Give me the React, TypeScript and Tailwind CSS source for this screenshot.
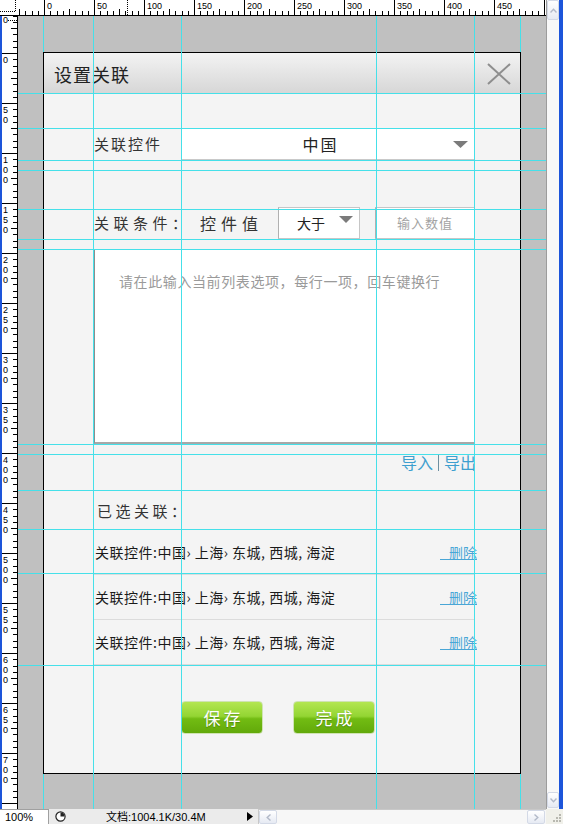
import React from "react"

// guide positions, in canvas pixels (canvas starts at page x 18, y 16)
const vGuides = [75, 163, 358, 456]
const edgeGuides = [25, 502]
const hGuides = [77, 112, 144, 154, 193, 223, 233, 428, 438, 474, 513, 557, 649]

const rows = [1, 2, 3]

function Corner() {
  return (
    <svg width="18" height="16" className="block bg-white">
      <line x1={0} y1={11.5} x2={15} y2={11.5} stroke="#000" strokeDasharray="1 1" />
      <line x1={15.5} y1={0} x2={15.5} y2={12} stroke="#000" strokeDasharray="1 1" />
      <line x1={0} y1={15.5} x2={18} y2={15.5} stroke="#000" />
    </svg>
  )
}

function TopRuler() {
  const marks: React.ReactNode[] = []
  for (let k = -1; k <= 10; k++) {
    const base = 26 + 50 * k
    marks.push(<line key={`M${k}`} x1={base + 0.5} y1={0} x2={base + 0.5} y2={15} stroke="#000" />)
    for (let j = 1; j < 8; j++) {
      const x = Math.round(base + j * 6.25) + 0.5
      marks.push(<line key={`m${k}-${j}`} x1={x} y1={j === 4 ? 9 : 11} x2={x} y2={15} stroke="#000" />)
    }
    if (k >= 0 && k <= 9)
      marks.push(
        <text key={`t${k}`} x={base + 3} y={9} fontSize={9} fontFamily="Liberation Sans, sans-serif" fill="#000">
          {50 * k}
        </text>
      )
  }
  return (
    <svg width="528" height="16" className="block bg-white">
      {marks}
      <line x1={0} y1={15.5} x2={528} y2={15.5} stroke="#000" />
      <line x1={109.5} y1={0} x2={109.5} y2={15} stroke="#000" strokeDasharray="1 1" />
    </svg>
  )
}

function LeftRuler() {
  const marks: React.ReactNode[] = []
  for (let k = -1; k <= 15; k++) {
    const base = 37 + 50 * k
    marks.push(<line key={`M${k}`} x1={2} y1={base + 0.5} x2={17} y2={base + 0.5} stroke="#000" />)
    for (let j = 1; j < 8; j++) {
      const y = Math.round(base + j * 6.25) + 0.5
      marks.push(<line key={`m${k}-${j}`} x1={j === 4 ? 11 : 13} y1={y} x2={17} y2={y} stroke="#000" />)
    }
    String(Math.abs(50 * k))
      .split("")
      .forEach((d, i) => {
        const y = base + 10 + 10 * i
        if (y < 6 || y > 792) return
        marks.push(
          <text key={`t${k}-${i}`} x={3} y={y} fontSize={9} fontFamily="Liberation Sans, sans-serif" fill="#000">
            {d}
          </text>
        )
      })
  }
  return (
    <svg width="18" height="793" className="block">
      <rect x={0} y={0} width={2} height={793} fill="#1d55da" />
      <rect x={2} y={0} width={15} height={793} fill="#fff" />
      {marks}
      <line x1={17.5} y1={0} x2={17.5} y2={793} stroke="#000" />
      <line x1={8} y1={4.5} x2={17} y2={4.5} stroke="#000" strokeDasharray="1 1" />
    </svg>
  )
}

function VScroll() {
  return (
    <div className="row-span-2 flex">
      <div className="flex w-[13px] flex-col justify-between border-l border-[#9c9c9c] bg-[#f8f8f8] pb-[1px]">
        <div className="flex h-[20px] items-center justify-center rounded-[2px] border border-[#d3d9e6] bg-linear-to-b from-white to-[#e6eaf3]">
          <svg width="7" height="5" viewBox="0 0 7 5">
            <path d="M0.5 4.5L3.5 1.2L6.5 4.5" fill="none" stroke="#b2b9c8" strokeWidth="1.4" />
          </svg>
        </div>
        <div className="flex h-[16px] items-center justify-center rounded-[2px] border border-[#d3d9e6] bg-linear-to-b from-white to-[#e6eaf3]">
          <svg width="7" height="5" viewBox="0 0 7 5">
            <path d="M0.5 0.5L3.5 3.8L6.5 0.5" fill="none" stroke="#b2b9c8" strokeWidth="1.4" />
          </svg>
        </div>
      </div>
      <div className="w-[4px] bg-[#1d55da]" />
    </div>
  )
}

function Caret({ w, h, className }: { w: number; h: number; className?: string }) {
  return (
    <svg className={className} width={w} height={h} viewBox={`0 0 ${w} ${h}`}>
      <path d={`M0 0H${w}L${w / 2} ${h}Z`} fill="#7b7b7b" />
    </svg>
  )
}

function Dialog() {
  return (
    <div className="ml-[25px] mt-[36px] flex h-[722px] w-[478px] flex-col border border-black bg-[#f4f4f4]">
      <div className="flex h-[41px] shrink-0 items-center justify-between bg-linear-to-b from-[#f3f3f3] to-[#d6d6d6] pl-[10px] pr-[9px]">
        <span className="text-[18px] leading-[20px] tracking-[1px] text-[#222]">设置关联</span>
        <svg width="24" height="22" viewBox="0 0 24 22">
          <path d="M1 1L23 21M23 1L1 21" stroke="#8e8e8e" strokeWidth="2" />
        </svg>
      </div>

      <div className="flex flex-col pl-[50px] pr-[45px] pt-[34px]">
        <div className="flex h-[32px] items-center">
          <span className="w-[87px] text-[15px] leading-[20px] tracking-[2px] text-[#333]">关联控件</span>
          <div className="relative flex h-full flex-1 items-center justify-center border border-[#c9c9c9] border-l-[#9d9d9d] bg-white pr-[15px]">
            <span className="text-[16px] leading-[20px] tracking-[2px] text-[#222]">中国</span>
            <Caret w={15} h={7} className="absolute right-[6px] top-[12px]" />
          </div>
        </div>

        <div className="mt-[47px] flex h-[32px] items-center">
          <span className="w-[106px] text-[15px] leading-[20px] tracking-[4.5px] text-[#333]">关联条件：</span>
          <span className="w-[78px] text-[16px] leading-[20px] tracking-[5px] text-[#333]">控件值</span>
          <div className="relative flex h-full w-[82px] items-center border border-[#c6c6c6] border-l-[#b0b0b0] bg-white pl-[18px]">
            <span className="text-[14px] leading-[20px] text-[#222]">大于</span>
            <Caret w={14} h={7} className="absolute right-[6px] top-[8px]" />
          </div>
          <div className="ml-[15px] flex h-full flex-1 items-center justify-center border border-[#c6c6c6] border-l-[#b0b0b0] bg-white text-[13px] leading-[18px] tracking-[1px] text-[#a3a3a3]">
            输入数值
          </div>
        </div>

        <div className="mt-[10px] h-[195px] border border-b-2 border-[#b4b4b4] border-l-[#8c8c8c] border-b-[#a8a8a8] bg-white pl-[24px] pt-[21px]">
          <p className="text-[14px] leading-[20px] tracking-[0.6px] text-[#9a9a9a]">请在此输入当前列表选项，每行一项，回车键换行</p>
        </div>

        <div className="-mr-[1px] mt-[8px] flex h-[20px] items-center justify-end text-[16px] leading-[20px] text-[#3d9fcf]">
          <span>导入</span>
          <span className="mx-[5px] h-[17px] border-l border-[#6d8fa0]" />
          <span>导出</span>
        </div>

        <div className="mt-[29px] h-[20px] pl-[3px] text-[15px] leading-[20px] tracking-[3.5px] text-[#333]">已选关联：</div>

        <div className="mt-[9px] flex flex-col">
          {rows.map((r) => (
            <div key={r} className="flex h-[45px] items-center justify-between border-b border-[#dcdcdc]">
              <span className="pl-[1px] text-[14px] leading-[20px] tracking-[0.5px] text-[#1a1a1a]">关联控件:中国› 上海› 东城, 西城, 海淀</span>
              <span className="-mr-[2px] border-b border-[#49a6d6] pl-[9px] text-[14px] leading-[14px] text-[#49a6d6]">删除</span>
            </div>
          ))}
        </div>

        <div className="mt-[36px] flex gap-[30px] pl-[87px]">
          {["保存", "完成"].map((t) => (
            <div
              key={t}
              className="flex h-[33px] w-[82px] items-center justify-center rounded-[4px] border border-[#cfe3b3] bg-[linear-gradient(#b3e651_0%,#93d533_46%,#72bc13_54%,#62a90a_100%)] pl-[3px] text-[17px] leading-[20px] tracking-[3px] text-white [text-shadow:0_1px_1px_rgba(0,0,0,0.25)]"
            >
              {t}
            </div>
          ))}
        </div>
      </div>
    </div>
  )
}

function Canvas() {
  return (
    <div className="relative h-[793px] overflow-hidden bg-[#c0c0c0]">
      <Dialog />
      <div className="pointer-events-none absolute inset-0">
        {hGuides.map((y) => (
          <div key={`h${y}`} className="absolute left-0 right-0 h-px bg-[#45e0e9]" style={{ top: y }} />
        ))}
        {vGuides.map((x) => (
          <div key={`v${x}`} className="absolute bottom-0 top-0 w-px bg-[#45e0e9]" style={{ left: x }} />
        ))}
        {edgeGuides.map((x) => (
          <React.Fragment key={`e${x}`}>
            <div className="absolute top-0 h-[36px] w-px bg-[#45e0e9]" style={{ left: x }} />
            <div className="absolute bottom-0 top-[758px] w-px bg-[#45e0e9]" style={{ left: x }} />
          </React.Fragment>
        ))}
      </div>
    </div>
  )
}

function StatusBar() {
  return (
    <div className="col-span-3 flex h-[15px] bg-[#ebebeb] font-['Liberation_Sans','Noto_Sans_CJK_SC',sans-serif] text-[11px] leading-[14px] text-black">
      <div className="w-[49px] border-r border-t border-[#a0a0a0] bg-white pl-[5px]">100%</div>
      <div className="flex w-[209px] items-center">
        <svg className="ml-[6px]" width="11" height="11" viewBox="0 0 11 11">
          <circle cx="5.5" cy="5.5" r="4.6" fill="#fff" stroke="#222" strokeWidth="1.2" />
          <path d="M5.5 5.5V1.5A4 4 0 0 1 9.5 5.5Z" fill="#222" />
        </svg>
        <span className="ml-[40px]">文档:1004.1K/30.4M</span>
        <svg className="ml-auto mr-[5px]" width="6" height="9" viewBox="0 0 6 9">
          <path d="M0 0L6 4.5L0 9Z" fill="#000" />
        </svg>
      </div>
      <div className="flex flex-1 border-l border-t border-[#c8c8c8] bg-[#f7f7f7]">
        <div className="flex w-[18px] items-center justify-center rounded-[2px] border border-[#d3d9e6] bg-linear-to-b from-white to-[#e6eaf3]">
          <svg width="5" height="7" viewBox="0 0 5 7">
            <path d="M4.5 0.5L1.2 3.5L4.5 6.5" fill="none" stroke="#b2b9c8" strokeWidth="1.4" />
          </svg>
        </div>
        <div className="flex-1" />
        <div className="mr-[1px] flex w-[18px] items-center justify-center rounded-[2px] border border-[#d3d9e6] bg-linear-to-b from-white to-[#e6eaf3]">
          <svg width="5" height="7" viewBox="0 0 5 7">
            <path d="M0.5 0.5L3.8 3.5L0.5 6.5" fill="none" stroke="#b2b9c8" strokeWidth="1.4" />
          </svg>
        </div>
      </div>
      <div className="flex w-[17px] items-end justify-end bg-[#f0f0ea] pb-[1px] pr-[1px]">
        <svg width="11" height="11" viewBox="0 0 11 11">
          <rect x="8" y="2" width="2" height="2" fill="#b8b8b0" />
          <rect x="5" y="5" width="2" height="2" fill="#b8b8b0" />
          <rect x="8" y="5" width="2" height="2" fill="#b8b8b0" />
          <rect x="2" y="8" width="2" height="2" fill="#b8b8b0" />
          <rect x="5" y="8" width="2" height="2" fill="#b8b8b0" />
          <rect x="8" y="8" width="2" height="2" fill="#b8b8b0" />
        </svg>
      </div>
    </div>
  )
}

export default function App() {
  return (
    <div className="grid h-[824px] w-[563px] grid-cols-[18px_528px_17px] grid-rows-[16px_793px_15px] overflow-hidden bg-[#c0c0c0] font-['Noto_Sans_CJK_SC',sans-serif]">
      <Corner />
      <TopRuler />
      <VScroll />
      <LeftRuler />
      <Canvas />
      <StatusBar />
    </div>
  )
}
